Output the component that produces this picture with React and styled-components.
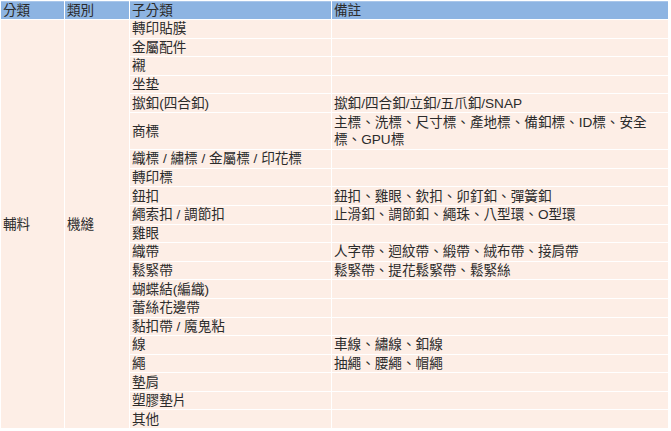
import React from "react";
import styled, { createGlobalStyle } from "styled-components";

const GlobalStyle = createGlobalStyle`
  html, body {
    margin: 0;
    padding: 0;
    background: #ffffff;
  }
`;

const rows = [
  { sub: "轉印貼膜", note: "" },
  { sub: "金屬配件", note: "" },
  { sub: "襯", note: "" },
  { sub: "坐垫", note: "" },
  { sub: "撳釦(四合釦)", note: "撳釦/四合釦/立釦/五爪釦/SNAP" },
  { sub: "商標", note: "主標、洗標、尺寸標、產地標、備釦標、ID標、安全標、GPU標", tall: true },
  { sub: "織標 / 繡標 / 金屬標 / 印花標", note: "" },
  { sub: "轉印標", note: "" },
  { sub: "鈕扣", note: "鈕扣、雞眼、欽扣、卯釘釦、彈簧釦" },
  { sub: "繩索扣 / 調節扣", note: "止滑釦、調節釦、繩珠、八型環、O型環" },
  { sub: "雞眼", note: "" },
  { sub: "織帶", note: "人字帶、迴紋帶、緞帶、絨布帶、接肩帶" },
  { sub: "鬆緊帶", note: "鬆緊帶、提花鬆緊帶、鬆緊絲" },
  { sub: "蝴蝶結(編織)", note: "" },
  { sub: "蕾絲花邊帶", note: "" },
  { sub: "黏扣帶 / 魔鬼粘", note: "" },
  { sub: "線", note: "車線、繡線、釦線" },
  { sub: "繩", note: "抽繩、腰繩、帽繩" },
  { sub: "墊肩", note: "" },
  { sub: "塑膠墊片", note: "" },
  { sub: "其他", note: "" },
];

const App = () => {
  return (
    <>
      <GlobalStyle />
      <Sheet>
        <colgroup>
          <col style={{ width: 63 }} />
          <col style={{ width: 64 }} />
          <col style={{ width: 201 }} />
          <col style={{ width: 336 }} />
        </colgroup>
        <thead>
          <tr>
            <HeadCell>分類</HeadCell>
            <HeadCell>類別</HeadCell>
            <HeadCell>子分類</HeadCell>
            <HeadCell>備註</HeadCell>
          </tr>
        </thead>
        <tbody>
          {rows.map((row, index) => (
            <Row key={index} $tall={row.tall}>
              {index === 0 && (
                <>
                  <Cell rowSpan={rows.length}>輔料</Cell>
                  <Cell rowSpan={rows.length}>機縫</Cell>
                </>
              )}
              <Cell>{row.sub}</Cell>
              <Cell>{row.note}</Cell>
            </Row>
          ))}
        </tbody>
      </Sheet>
    </>
  );
};

const Sheet = styled.table`
  table-layout: fixed;
  width: 669px;
  border-collapse: separate;
  border-spacing: 1px;
  font-family: "Liberation Sans", "Noto Sans CJK TC", sans-serif;
  font-size: 13.6px;
  line-height: 17px;
  color: #2b2b2b;
`;

const HeadCell = styled.th`
  height: 18px;
  padding: 0 2px;
  background: #8db4e2;
  border-top: 1px solid #a9c6ea;
  box-sizing: border-box;
  font-weight: normal;
  text-align: left;
  vertical-align: middle;
  white-space: nowrap;
  overflow: hidden;
`;

const Row = styled.tr`
  height: ${(p) => (p.$tall ? "36.2px" : "17.6px")};
`;

const Cell = styled.td`
  padding: 0 2px;
  background: #fdeee6;
  text-align: left;
  vertical-align: middle;
  word-break: break-all;
`;

export default App;
